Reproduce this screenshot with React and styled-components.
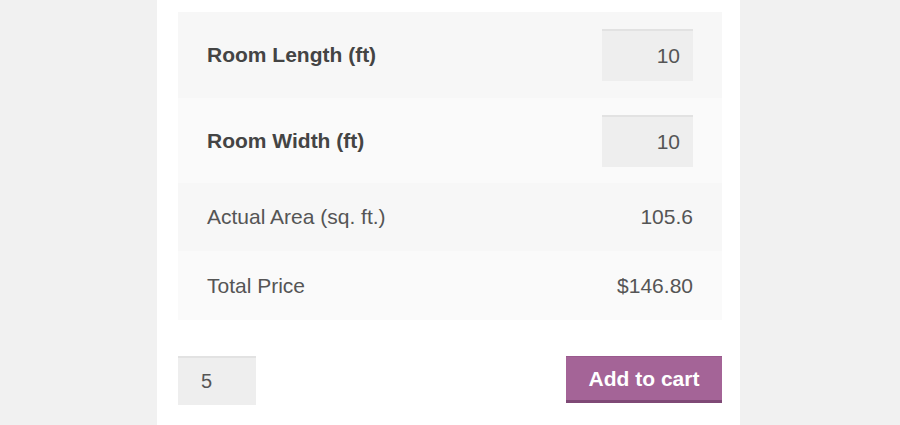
import React from 'react';
import styled, { createGlobalStyle } from 'styled-components';

const GlobalStyle = createGlobalStyle`
  html, body {
    margin: 0;
    padding: 0;
    background: #f1f1f1;
    font-family: "Liberation Sans", Arial, sans-serif;
  }
`;

const Panel = styled.div`
  margin-left: 157px;
  width: 583px;
  min-height: 425px;
  box-sizing: border-box;
  background: #ffffff;
  padding: 12px 18px 0 21px;
`;

const Table = styled.div`
  width: 544px;
  display: flex;
  flex-direction: column;
`;

const Row = styled.div`
  display: flex;
  align-items: center;
  justify-content: space-between;
  height: ${p => p.h}px;
  padding: 0 29px;
  background: ${p => (p.alt ? '#fafafa' : '#f7f7f7')};
`;

const Label = styled.span`
  font-size: 21px;
  font-weight: ${p => (p.bold ? 700 : 400)};
  color: ${p => (p.bold ? '#444' : '#555')};
`;

const Value = styled.span`
  font-size: 21px;
  color: #555;
`;

const NumInput = styled.input`
  width: 91px;
  height: 52px;
  box-sizing: border-box;
  border: none;
  border-top: 2px solid #e2e2e2;
  background: #eeeeee;
  font-family: inherit;
  font-size: 21px;
  color: #555;
  text-align: ${p => (p.left ? 'left' : 'right')};
  padding: 0 13px 0 23px;
  outline: none;
`;

const CartBar = styled.div`
  display: flex;
  justify-content: space-between;
  align-items: flex-start;
  width: 544px;
  margin-top: 36px;
`;

const QtyInput = styled(NumInput)`
  width: 78px;
  height: 49px;
  text-align: left;
  font-size: 20px;
`;

const CartButton = styled.button`
  width: 156px;
  height: 47px;
  box-sizing: border-box;
  border: none;
  border-top: 1px solid #9a5a8d;
  border-bottom: 3px solid #7f4976;
  background: #a46497;
  color: #fff;
  font-family: inherit;
  font-weight: 700;
  font-size: 21px;
  padding: 0;
  cursor: pointer;
`;

export default function App() {
  return (
    <>
      <GlobalStyle />
      <Panel>
        <Table>
          <Row h={86}>
            <Label bold>Room Length (ft)</Label>
            <NumInput defaultValue="10" />
          </Row>
          <Row h={85} alt>
            <Label bold>Room Width (ft)</Label>
            <NumInput defaultValue="10" />
          </Row>
          <Row h={68}>
            <Label>Actual Area (sq. ft.)</Label>
            <Value>105.6</Value>
          </Row>
          <Row h={69} alt>
            <Label>Total Price</Label>
            <Value>$146.80</Value>
          </Row>
        </Table>
        <CartBar>
          <QtyInput defaultValue="5" />
          <CartButton>Add to cart</CartButton>
        </CartBar>
      </Panel>
    </>
  );
}
